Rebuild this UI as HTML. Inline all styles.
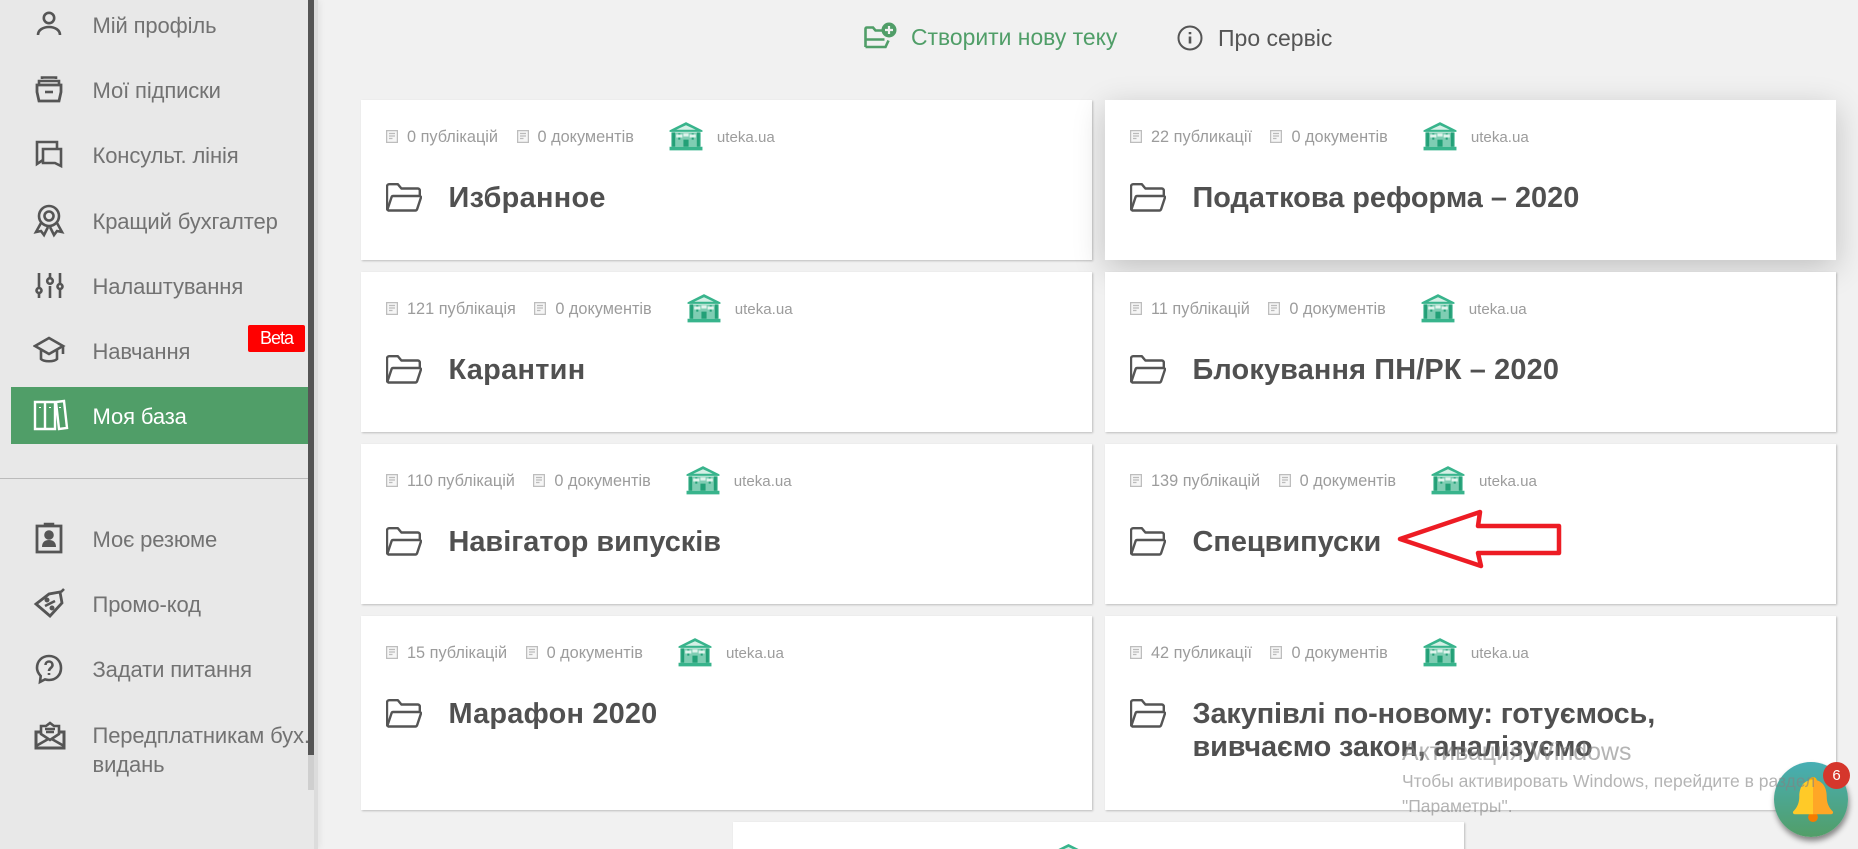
<!DOCTYPE html>
<html lang="uk"><head><meta charset="utf-8"><title>Моя база</title>
<style>
*{box-sizing:border-box}
html,body{margin:0;padding:0;width:1858px;height:849px;overflow:hidden;background:#f1f1f1;font-family:"Liberation Sans","Noto Sans CJK SC",sans-serif}
#wrap{position:relative;width:1858px;height:849px;overflow:hidden;contain:paint}
.abs{position:absolute}
#side{position:absolute;left:0;top:0;width:318px;height:849px;background:#e8e8e8;border-right:4px solid #dcdcdc;box-shadow:2px 0 6px rgba(0,0,0,.06)}
#thumbtrack{position:absolute;left:308px;top:0;width:6px;height:790px;background:#cfcfcf}
#thumb{position:absolute;left:308px;top:0;width:6px;height:755px;background:#555}
.mi{position:absolute;left:92.500px;font-size:22px;line-height:30px;color:#727272;white-space:nowrap;letter-spacing:-.12px}
.ic{position:absolute;left:33px;width:36px;height:36px;fill:none;stroke:#555;stroke-width:2.6}
#act{position:absolute;left:11px;top:387px;width:297px;height:57px;background:#509e68}
#beta{position:absolute;left:248px;top:325px;width:57px;height:27px;background:#f00;border-radius:2px;color:#fff;font-size:18px;line-height:27px;text-align:center;letter-spacing:-1px}
#div{position:absolute;left:0;top:478px;width:308px;height:1px;background:#bbb}
.card{position:absolute;background:#fff;box-shadow:1px 1px 2px rgba(0,0,0,.22)}
.meta{position:absolute;left:25px;top:27px;height:20px;display:flex;align-items:center;font-size:16.300px;color:#9c9c9c;white-space:nowrap}
.meta svg.d{width:12px;height:13px;margin:-1px 9px 0 0;fill:#f6f6f6;stroke:#bdbdbd;stroke-width:1.3}
.meta svg.d+span.g{margin-right:18.500px}
.meta svg.lg{width:36px;height:30px;margin:-3px 13px 0 34px}
.meta span.u{font-size:15.100px}
.fo{position:absolute;left:25px;top:83px;width:36px;height:29px;fill:none;stroke:#555;stroke-width:2.4;stroke-linejoin:round}
.ti{position:absolute;left:87.500px;top:82px;font-size:28.900px;line-height:33px;font-weight:bold;color:#505050;white-space:nowrap}
</style></head><body>
<div id="wrap">
<svg width="0" height="0" style="position:absolute"><defs>
<symbol id="doc" viewBox="0 0 12 13"><path d="M.6.6h10.800v11.800H.6z"/><path d="M3 3.500h6M3 6h6M3 8.500h3.500" stroke="#bbb" fill="none"/></symbol>
<symbol id="fold" viewBox="0 0 36 29"><path d="M3 27.500c-1 0-2-.8-2-2V3.500C1 2.200 2 1.200 3.200 1.200h8.600l3.600 4.300h16.400c1.200 0 2 .8 2 2v5.500"/><path d="M3 27.500c-.9 0-1.600-.8-1.300-1.800L5.600 14c.3-.7.9-1 1.600-1h26.300c1 0 1.700.9 1.400 1.800l-3.800 11.400c-.3.8-.9 1.300-1.700 1.300z"/></symbol>
<symbol id="logo" viewBox="0 0 35 29"><path d="M17.500 1 33.500 9v1.500H1.500V9z" fill="#38b48c"/><path d="M17.500 4 27 8.400H8z" fill="#d5f0e6"/><path d="M3 11h29v14H3z" fill="#7fcdb3"/><path d="M4 11h3v14H4zM28 11h3v14h-3zM15 18h5v7h-5zM10 12h2v6h-2zM23 12h2v6h-2z" fill="#23a077"/><path d="M8 13h6v3H8zM21 13h6v3h-6zM15 12h5v3h-5z" fill="#dff3ec"/><path d="M1.500 25h32v3.500h-32z" fill="#38b48c"/></symbol>
</defs></svg>

<div id="side"></div>
<div id="thumbtrack"></div><div id="thumb"></div>
<div id="act"></div>
<div id="div"></div>

<svg class="ic" style="top:7px" viewBox="0 0 36 36"><circle cx="16" cy="11" r="5.200"/><path d="M5 28c0-5 5-8 11-8s11 3 11 8"/></svg>
<div class="mi" style="top:11px">Мій профіль</div>
<svg class="ic" style="top:72px" viewBox="0 0 36 36"><path d="M9 7V5.500h14V7M6 12V9h20v3"/><path d="M4 13h24v7l-2 9H6l-2-9z" stroke-width="2.800"/><path d="M12 20h8"/></svg>
<div class="mi" style="top:76px">Мої підписки</div>
<svg class="ic" style="top:137px" viewBox="0 0 36 36"><path d="M24 11V5H4v22l6-4"/><path d="M10 12h18v17l-6-3H10z"/></svg>
<div class="mi" style="top:141px">Консульт. лінія</div>
<svg class="ic" style="top:203px" viewBox="0 0 36 36"><circle cx="16" cy="13" r="10"/><circle cx="16" cy="13" r="4.500"/><path d="m8 20-5 9 5-1 3 4 4-8M24 20l5 9-5-1-3 4-4-8"/></svg>
<div class="mi" style="top:207px">Кращий бухгалтер</div>
<svg class="ic" style="top:268px" viewBox="0 0 36 36"><path d="M6 5v15M6 25v5M17 5v4M17 18v12M27 5v11M27 21v9"/><circle cx="6" cy="22.500" r="2.500"/><circle cx="17" cy="13" r="2.800"/><circle cx="27" cy="18.500" r="2.500"/></svg>
<div class="mi" style="top:272px">Налаштування</div>
<svg class="ic" style="top:333px" viewBox="0 0 36 36"><path d="M2 13 16 5l14 8-14 8z"/><path d="M8 17v9c3 3 13 3 16 0v-9M30 13v8"/></svg>
<div class="mi" style="top:337px">Навчання</div>
<div id="beta">Beta</div>
<svg class="ic" style="top:398px;stroke:#fff;stroke-width:2.400" viewBox="0 0 36 36"><path d="M2 4h10v27H2zM12 4h10v27H12zM23 4l8-1 3 27-8 1z"/><path d="M7 9v1M17 9v1M27 9v1" stroke-width="2"/></svg>
<div class="mi" style="top:402px;color:#fff">Моя база</div>

<svg class="ic" style="top:521px" viewBox="0 0 36 36"><path d="M4 5h24v26H4z" stroke-width="2.800"/><path d="M12 5V3h8v2" stroke-width="2.500"/><circle cx="16" cy="14" r="3.500" fill="#555"/><path d="M9 26c0-5 3-7 7-7s7 2 7 7z" fill="#555" stroke="none"/></svg>
<div class="mi" style="top:525px">Моє резюме</div>
<svg class="ic" style="top:587px" viewBox="0 0 36 36"><path d="M3 17 16 7l11-2 2 11-12 13z" stroke-width="2.800"/><path d="m28 5 3-3M12 19l10-5"/><circle cx="14" cy="13" r="1.200"/><circle cx="19" cy="21" r="1.200"/></svg>
<div class="mi" style="top:590px">Промо-код</div>
<svg class="ic" style="top:652px" viewBox="0 0 36 36"><path d="M7 30l.700-6C5 21 4 18 4 16 4 9 9 4 16 4s12 5 12 12-5 12-12 12c-2 0-3-.3-4-.6z"/><path d="M12.500 13c0-2 1.500-3.500 3.500-3.500s3.500 1.500 3.500 3.500c0 3-3.500 3-3.500 6"/><path d="M16 21v2"/></svg>
<div class="mi" style="top:655px">Задати питання</div>
<svg class="ic" style="top:718px" viewBox="0 0 36 36"><path d="M3 14h28v16H3z" stroke-width="3"/><path d="M3 28l14-8 14 8"/><path d="M8 16V8h5l4-3 4 3h5v8l-9 6z" fill="#e8e8e8"/><path d="M12 11h10M13 14h8"/></svg>
<div class="mi" style="top:721px">Передплатникам бух.</div>
<div class="mi" style="top:750px">видань</div>

<svg class="abs" style="left:864px;top:22px" width="33" height="27" viewBox="0 0 33 27" fill="none" stroke="#509e68" stroke-width="2.600"><path d="M1.500 25V7c0-1 .6-1.500 1.500-1.500h6l2.500 3h8M1.500 25h20l3-6.500M1.500 17.500h19"/><circle cx="25" cy="8" r="7.500" fill="#509e68" stroke="none"/><path d="M25 4v8M21 8h8" stroke="#f1f1f1" stroke-width="2.200"/></svg>
<div class="abs" style="left:911px;top:23px;font-size:22.900px;line-height:28px;color:#509e68;white-space:nowrap">Створити нову теку</div>
<svg class="abs" style="left:1177px;top:25px" width="26" height="26" viewBox="0 0 26 26" fill="none" stroke="#555" stroke-width="2"><circle cx="13" cy="13" r="11.500"/><path d="M13 11.500v7M13 7v2.200" stroke-width="2.600"/></svg>
<div class="abs" style="left:1218px;top:24px;font-size:23px;line-height:28px;color:#555;white-space:nowrap">Про сервіс</div>

<div class="card" style="left:361px;top:100px;width:731px;height:160px"><div class="meta"><svg class="d"><use href="#doc"/></svg><span class="g">0 публікацій</span><svg class="d"><use href="#doc"/></svg><span>0 документів</span><svg class="lg"><use href="#logo"/></svg><span class="u">uteka.ua</span></div><svg class="fo"><use href="#fold"/></svg><div class="ti" style="letter-spacing:.3px">Избранное</div></div>
<div class="card" style="left:1105px;top:100px;width:731px;height:160px;box-shadow:0 8px 30px rgba(0,0,0,.2)"><div class="meta"><svg class="d"><use href="#doc"/></svg><span class="g">22 публикації</span><svg class="d"><use href="#doc"/></svg><span>0 документів</span><svg class="lg"><use href="#logo"/></svg><span class="u">uteka.ua</span></div><svg class="fo"><use href="#fold"/></svg><div class="ti">Податкова реформа – 2020</div></div>

<div class="card" style="left:361px;top:272px;width:731px;height:160px"><div class="meta"><svg class="d"><use href="#doc"/></svg><span class="g">121 публікація</span><svg class="d"><use href="#doc"/></svg><span>0 документів</span><svg class="lg"><use href="#logo"/></svg><span class="u">uteka.ua</span></div><svg class="fo"><use href="#fold"/></svg><div class="ti" style="letter-spacing:.3px">Карантин</div></div>
<div class="card" style="left:1105px;top:272px;width:731px;height:160px"><div class="meta"><svg class="d"><use href="#doc"/></svg><span class="g">11 публікацій</span><svg class="d"><use href="#doc"/></svg><span>0 документів</span><svg class="lg"><use href="#logo"/></svg><span class="u">uteka.ua</span></div><svg class="fo"><use href="#fold"/></svg><div class="ti" style="letter-spacing:.15px">Блокування ПН/РК – 2020</div></div>

<div class="card" style="left:361px;top:444px;width:731px;height:160px"><div class="meta"><svg class="d"><use href="#doc"/></svg><span class="g">110 публікацій</span><svg class="d"><use href="#doc"/></svg><span>0 документів</span><svg class="lg"><use href="#logo"/></svg><span class="u">uteka.ua</span></div><svg class="fo"><use href="#fold"/></svg><div class="ti">Навігатор випусків</div></div>
<div class="card" style="left:1105px;top:444px;width:731px;height:160px"><div class="meta"><svg class="d"><use href="#doc"/></svg><span class="g">139 публікацій</span><svg class="d"><use href="#doc"/></svg><span>0 документів</span><svg class="lg"><use href="#logo"/></svg><span class="u">uteka.ua</span></div><svg class="fo"><use href="#fold"/></svg><div class="ti">Спецвипуски</div></div>

<div class="card" style="left:361px;top:616px;width:731px;height:194px"><div class="meta"><svg class="d"><use href="#doc"/></svg><span class="g">15 публікацій</span><svg class="d"><use href="#doc"/></svg><span>0 документів</span><svg class="lg"><use href="#logo"/></svg><span class="u">uteka.ua</span></div><svg class="fo"><use href="#fold"/></svg><div class="ti" style="letter-spacing:.2px">Марафон 2020</div></div>
<div class="card" style="left:1105px;top:616px;width:731px;height:194px"><div class="meta"><svg class="d"><use href="#doc"/></svg><span class="g">42 публикації</span><svg class="d"><use href="#doc"/></svg><span>0 документів</span><svg class="lg"><use href="#logo"/></svg><span class="u">uteka.ua</span></div><svg class="fo"><use href="#fold"/></svg><div class="ti" style="letter-spacing:-.12px">Закупівлі по-новому: готуємось,<br>вивчаємо закон, аналізуємо</div></div>

<div class="card" style="left:733px;top:822px;width:731px;height:60px"><svg class="abs" style="left:318px;top:21px" width="35" height="29"><use href="#logo"/></svg></div>

<svg class="abs" style="left:1390px;top:501px" width="180" height="75" viewBox="0 0 180 75" fill="none" stroke="#ed1c24" stroke-width="4.500" stroke-linejoin="round"><path d="M10 38 90 11 88 25H169V52H88L91 65z"/></svg>

<div class="abs" style="left:1774px;top:762px;width:74px;height:75px;border-radius:50%;background:linear-gradient(#47aeb4,#529e68);box-shadow:1px 4px 6px rgba(0,0,0,.45)"></div>
<svg class="abs" style="left:1792px;top:776px" width="42" height="47" viewBox="0 0 42 48"><circle cx="21" cy="42" r="5" fill="#f57c00"/><circle cx="21" cy="5" r="4" fill="#ffb300"/><path d="M21 4C11 4 7 12 7 21c0 6-2 11-6 15-1 1-.5 3 1.500 3H21z" fill="#ffca28"/><path d="M21 4c10 0 14 8 14 17 0 6 2 11 6 15 1 1 .5 3-1.500 3H21z" fill="#ffa726"/></svg>
<div class="abs" style="left:1823px;top:762px;width:27px;height:27px;border-radius:50%;background:#d5362c;color:#fff;font-size:15px;line-height:27px;text-align:center">6</div>

<div class="abs" style="left:1402px;top:737px;font-size:24.900px;line-height:30px;color:rgba(130,130,130,.6);white-space:nowrap">Активация Windows</div>
<div class="abs" style="left:1402px;top:769px;font-size:17.500px;line-height:24.500px;color:rgba(130,130,130,.6);white-space:nowrap">Чтобы активировать Windows, перейдите в раздел<br>"Параметры".</div>
</div>
</body></html>
